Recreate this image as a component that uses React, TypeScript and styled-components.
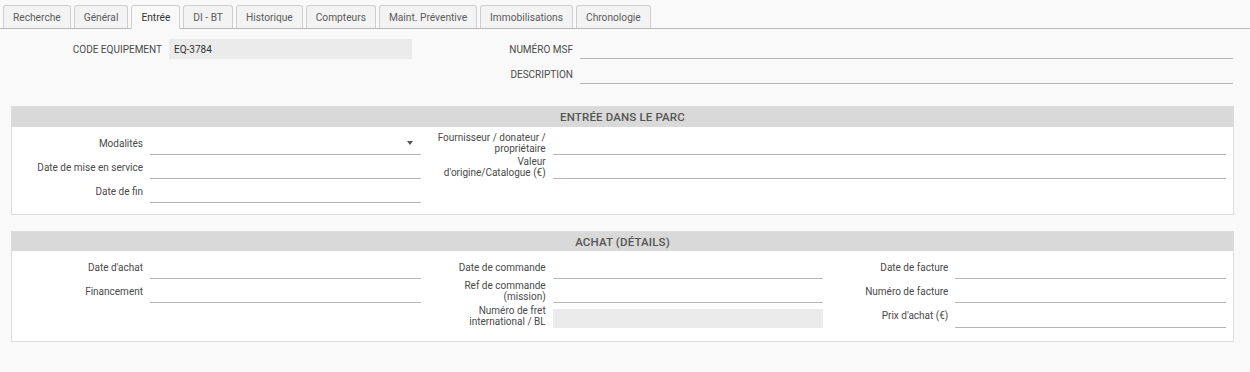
import React from "react";
import styled, { createGlobalStyle } from "styled-components";

const GlobalStyle = createGlobalStyle`
  html, body { margin: 0; padding: 0; background: #f9f9f9; }
  body { font-family: Roboto, "Liberation Sans", Arial, sans-serif; color: #444; }
  * { box-sizing: border-box; }
`;

const Page = styled.div`
  width: 1250px;
  min-height: 372px;
  background: #f9f9f9;
`;

const TabBar = styled.div`
  display: flex;
  align-items: flex-end;
  gap: 3px;
  padding: 5px 0 0 3px;
  height: 29px;
  border-bottom: 1px solid #b9b9b9;
`;

const Tab = styled.div<{ $active?: boolean }>`
  height: ${(p) => (p.$active ? "24px" : "23px")};
  padding: 0 9px;
  display: flex;
  align-items: center;
  font-size: 10.2px;
  color: ${(p) => (p.$active ? "#333" : "#5a5a5a")};
  background: ${(p) => (p.$active ? "#f9f9f9" : "#f3f3f3")};
  border: 1px solid #cfcfcf;
  border-bottom: ${(p) => (p.$active ? "1px solid #f9f9f9" : "none")};
  border-radius: 3px 3px 0 0;
  margin-bottom: ${(p) => (p.$active ? "-1px" : "0")};
  white-space: nowrap;
`;

const TopGrid = styled.div`
  display: grid;
  grid-template-columns: 412px 1fr;
  column-gap: 7px;
  padding: 10px 17px 0 0;
`;

const Stack = styled.div<{ $gap?: number; $span?: number }>`
  display: flex;
  flex-direction: column;
  gap: ${(p) => p.$gap ?? 0}px;
  grid-column: span ${(p) => p.$span ?? 1};
`;

const Field = styled.div<{ $labelW: number; $h?: number }>`
  display: grid;
  grid-template-columns: ${(p) => p.$labelW}px 1fr;
  column-gap: 7px;
  align-items: stretch;
  min-height: ${(p) => p.$h ?? 24}px;
`;

const Label = styled.div`
  display: flex;
  align-items: center;
  justify-content: flex-end;
  text-align: right;
  padding-left: 7px;
  font-size: 10px;
  line-height: 11px;
  color: #4a4a4a;
`;

const LineInput = styled.div`
  position: relative;
  border-bottom: 1px solid #b5b5b5;
  font-size: 10px;
  color: #333;
  display: flex;
  align-items: center;
  padding: 0 5px;
`;

const GreyInput = styled.div<{ $mt?: number }>`
  background: #ebebeb;
  margin-top: ${(p) => p.$mt ?? 0}px;
  font-size: 10px;
  color: #333;
  display: flex;
  align-items: center;
  padding: 0 5px;
`;

const Caret = styled.span`
  position: absolute;
  right: 8px;
  top: 50%;
  margin-top: -2px;
  width: 0;
  height: 0;
  border-left: 3.5px solid transparent;
  border-right: 3.5px solid transparent;
  border-top: 4px solid #555;
`;

const Section = styled.section<{ $mt: number }>`
  margin: ${(p) => p.$mt}px 16px 0 11px;
  background: #fff;
  border: 1px solid #dcdcdc;
`;

const SectionHeader = styled.div<{ $h: number }>`
  height: ${(p) => p.$h}px;
  background: #d9d9d9;
  display: flex;
  align-items: center;
  justify-content: center;
  font-size: 11.5px;
  font-weight: 500;
  color: #555;
  letter-spacing: 0.15px;
`;

const SectionBody = styled.div<{ $pb: number }>`
  display: grid;
  grid-template-columns: repeat(3, 1fr);
  column-gap: 6px;
  padding: 4px 7px ${(p) => p.$pb}px 12px;
`;

type F = { label: string; kind?: "line" | "grey" | "select"; value?: string; h?: number };

const renderField = (f: F, labelW: number, key: number) => (
  <Field key={key} $labelW={labelW} $h={f.h}>
    <Label>{f.label}</Label>
    {f.kind === "grey" ? (
      <GreyInput $mt={6}>{f.value}</GreyInput>
    ) : (
      <LineInput>
        {f.value}
        {f.kind === "select" && <Caret />}
      </LineInput>
    )}
  </Field>
);

const tabs = [
  "Recherche",
  "Général",
  "Entrée",
  "DI - BT",
  "Historique",
  "Compteurs",
  "Maint. Préventive",
  "Immobilisations",
  "Chronologie",
];

export default function App() {
  return (
    <Page>
      <GlobalStyle />
      <TabBar>
        {tabs.map((t) => (
          <Tab key={t} $active={t === "Entrée"}>
            {t}
          </Tab>
        ))}
      </TabBar>

      <TopGrid>
        <Stack>
          <Field $labelW={162} $h={20}>
            <Label>CODE EQUIPEMENT</Label>
            <GreyInput>EQ-3784</GreyInput>
          </Field>
        </Stack>
        <Stack $gap={5}>
          <Field $labelW={154} $h={20}>
            <Label>NUMÉRO MSF</Label>
            <LineInput />
          </Field>
          <Field $labelW={154} $h={20}>
            <Label>DESCRIPTION</Label>
            <LineInput />
          </Field>
        </Stack>
      </TopGrid>

      <Section $mt={22}>
        <SectionHeader $h={20}>ENTRÉE DANS LE PARC</SectionHeader>
        <SectionBody $pb={11}>
          <Stack>
            {[
              { label: "Modalités", kind: "select" as const },
              { label: "Date de mise en service" },
              { label: "Date de fin" },
            ].map((f, i) => renderField(f, 119, i))}
          </Stack>
          <Stack $span={2}>
            {[
              { label: "Fournisseur / donateur / propriétaire" },
              { label: "Valeur d'origine/Catalogue (€)" },
            ].map((f, i) => renderField(f, 119, i))}
          </Stack>
        </SectionBody>
      </Section>

      <Section $mt={16}>
        <SectionHeader $h={19}>ACHAT (DÉTAILS)</SectionHeader>
        <SectionBody $pb={13}>
          <Stack>
            {[{ label: "Date d'achat" }, { label: "Financement" }].map((f, i) =>
              renderField(f, 119, i)
            )}
          </Stack>
          <Stack>
            {[
              { label: "Date de commande" },
              { label: "Ref de commande (mission)" },
              { label: "Numéro de fret international / BL", kind: "grey" as const, h: 25 },
            ].map((f, i) => renderField(f, 119, i))}
          </Stack>
          <Stack>
            {[
              { label: "Date de facture" },
              { label: "Numéro de facture" },
              { label: "Prix d'achat (€)", h: 25 },
            ].map((f, i) => renderField(f, 119, i))}
          </Stack>
        </SectionBody>
      </Section>
    </Page>
  );
}
